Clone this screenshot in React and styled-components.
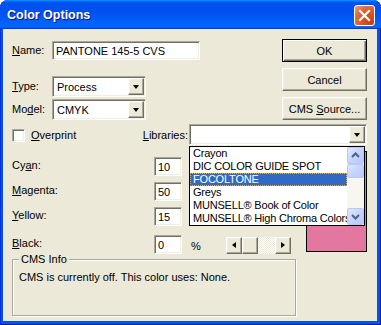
import React from "react";
import styled, { createGlobalStyle } from "styled-components";

const GlobalStyle = createGlobalStyle`
  html, body {
    margin: 0;
    padding: 0;
    background: #ffffff;
  }
  body {
    font-family: "Liberation Sans", Arial, sans-serif;
    font-size: 11px;
    color: #000;
  }
`;

const libraries = [
  "Crayon",
  "DIC COLOR GUIDE SPOT",
  "FOCOLTONE",
  "Greys",
  "MUNSELL® Book of Color",
  "MUNSELL® High Chroma Colors",
];

const values = [
  { label: "Cyan:", key: "a", pre: "Cy", post: "n:", value: "10", mt: 0 },
  { label: "Magenta:", key: "M", pre: "", post: "agenta:", value: "50", mt: 6 },
  { label: "Yellow:", key: "Y", pre: "", post: "ellow:", value: "15", mt: 6 },
];

const App = () => {
  return (
    <>
      <GlobalStyle />
      <Window>
        <TitleBar>
          <Title>Color Options</Title>
          <CloseButton>
            <svg width="21" height="21" viewBox="0 0 21 21">
              <path
                d="M6 6 L15 15 M15 6 L6 15"
                stroke="#fff"
                strokeWidth="2.2"
                strokeLinecap="square"
              />
            </svg>
          </CloseButton>
        </TitleBar>

        <Body>
          <TopSection>
            <FieldColumn>
              <FieldRow $h={19} $mt={2}>
                <Label>
                  <Key>N</Key>ame:
                </Label>
                <TextField $w={148}>PANTONE 145-5 CVS</TextField>
              </FieldRow>
              <FieldRow $h={21} $mt={16}>
                <Label>
                  <Key>T</Key>ype:
                </Label>
                <Combo $w={94}>
                  <ComboText>Process</ComboText>
                  <DropButton>
                    <TriDown />
                  </DropButton>
                </Combo>
              </FieldRow>
              <FieldRow $h={21} $mt={2}>
                <Label>
                  Mo<Key>d</Key>el:
                </Label>
                <Combo $w={94}>
                  <ComboText>CMYK</ComboText>
                  <DropButton>
                    <TriDown />
                  </DropButton>
                </Combo>
              </FieldRow>
            </FieldColumn>

            <ButtonColumn>
              <PushButton $default>OK</PushButton>
              <PushButton>Cancel</PushButton>
              <PushButton>
                <span>
                  CMS <Key>S</Key>ource...
                </span>
              </PushButton>
            </ButtonColumn>
          </TopSection>

          <LibRow>
            <CheckGroup>
              <CheckBox />
              <span>
                <Key>O</Key>verprint
              </span>
            </CheckGroup>
            <LibGroup>
              <span>
                <Key>L</Key>ibraries:
              </span>
              <ComboWrap>
                <Combo $w={178}>
                  <ComboText />
                  <DropButton>
                    <TriDown />
                  </DropButton>
                </Combo>
                <DropList>
                  <ListItems>
                    {libraries.map((name) => (
                      <ListItem key={name} $selected={name === "FOCOLTONE"}>
                        {name}
                      </ListItem>
                    ))}
                  </ListItems>
                  <VScroll>
                    <XpArrow>
                      <svg width="15" height="15" viewBox="0 0 15 15">
                        <polyline
                          points="4,9 7.5,5.5 11,9"
                          fill="none"
                          stroke="#4d6185"
                          strokeWidth="2"
                        />
                      </svg>
                    </XpArrow>
                    <XpThumb />
                    <VTrack />
                    <XpArrow>
                      <svg width="15" height="15" viewBox="0 0 15 15">
                        <polyline
                          points="4,6 7.5,9.5 11,6"
                          fill="none"
                          stroke="#4d6185"
                          strokeWidth="2"
                        />
                      </svg>
                    </XpArrow>
                  </VScroll>
                </DropList>
              </ComboWrap>
            </LibGroup>
          </LibRow>

          <ValuesSection>
            <ValueColumn>
              {values.map((v) => (
                <ValueRow key={v.label} $mt={v.mt}>
                  <ValueLabel>
                    {v.pre}
                    <Key>{v.key}</Key>
                    {v.post}
                  </ValueLabel>
                  <TextField $w={28}>{v.value}</TextField>
                </ValueRow>
              ))}
              <ValueRow $mt={9}>
                <ValueLabel>
                  <Key>B</Key>lack:
                </ValueLabel>
                <TextField $w={28}>0</TextField>
                <Percent>%</Percent>
                <HScroll>
                  <ClassicArrow>
                    <TriLeft />
                  </ClassicArrow>
                  <ClassicThumb />
                  <HTrack />
                  <ClassicArrow>
                    <TriRight />
                  </ClassicArrow>
                </HScroll>
              </ValueRow>
            </ValueColumn>
            <Swatch />
          </ValuesSection>

          <GroupBox>
            <GroupLegend>CMS Info</GroupLegend>
            <GroupText>CMS is currently off. This color uses: None.</GroupText>
          </GroupBox>
        </Body>
      </Window>
    </>
  );
};

export default App;

const sunken = `
  border: 1px solid;
  border-color: #aca899 #ffffff #ffffff #aca899;
  box-shadow: inset 1px 1px 0 #716f64, inset -1px -1px 0 #f1efe2;
`;

const raised = `
  border: 1px solid;
  border-color: #ffffff #716f64 #716f64 #ffffff;
  box-shadow: inset -1px -1px 0 #aca899, inset 1px 1px 0 #f1efe2;
  background: #ece9d8;
`;

const Window = styled.div`
  width: 381px;
  height: 325px;
  box-sizing: border-box;
  display: flex;
  flex-direction: column;
  background: #0054e3;
  border-radius: 8px 8px 0 0;
  overflow: hidden;
  box-shadow: inset 1px 0 0 #0831d9, inset -1px 0 0 #001ea0,
    inset 0 -1px 0 #001ea0;
`;

const TitleBar = styled.div`
  height: 29px;
  flex: none;
  display: flex;
  align-items: center;
  justify-content: space-between;
  padding: 1px 6px 0 7px;
  box-sizing: border-box;
  background: linear-gradient(
    180deg,
    #0997ff,
    #0053ee 8%,
    #0050ee 40%,
    #0066ff 88%,
    #0066ff 93%,
    #005bff 95%,
    #003dd7 96%,
    #003dd7
  );
`;

const Title = styled.div`
  color: #fff;
  font-weight: bold;
  font-size: 12.5px;
  text-shadow: 1px 1px 0 #0f1089;
`;

const CloseButton = styled.div`
  width: 21px;
  height: 21px;
  box-sizing: border-box;
  border: 1px solid #fff;
  border-radius: 3px;
  display: flex;
  align-items: center;
  justify-content: center;
  background: radial-gradient(
    circle at 85% 85%,
    #c8400e 0%,
    #dc5a2c 50%,
    #e2724c 75%,
    #f0a88c 100%
  );
  svg {
    margin: -1px;
  }
`;

const Body = styled.div`
  flex: 1;
  margin: 0 4px 4px 3px;
  background: #ece9d8;
  padding: 10px 10px 5px 9px;
  display: flex;
  flex-direction: column;
  min-height: 0;
`;

const TopSection = styled.div`
  display: flex;
  justify-content: space-between;
  align-items: flex-start;
`;

const FieldColumn = styled.div`
  display: flex;
  flex-direction: column;
`;

const FieldRow = styled.div`
  display: flex;
  align-items: center;
  height: ${({ $h }) => $h}px;
  margin-top: ${({ $mt }) => $mt}px;
`;

const Label = styled.span`
  width: 40px;
  flex: none;
  margin-top: -2px;
`;

const Key = styled.span`
  text-decoration: underline;
  text-underline-offset: 1px;
`;

const TextField = styled.div`
  ${sunken}
  width: ${({ $w }) => $w}px;
  height: 100%;
  box-sizing: border-box;
  background: #fff;
  padding: 0 3px;
  display: flex;
  align-items: center;
  white-space: nowrap;
  overflow: hidden;
`;

const Combo = styled.div`
  ${sunken}
  width: ${({ $w }) => $w}px;
  height: 21px;
  box-sizing: border-box;
  background: #fff;
  display: flex;
  align-items: stretch;
  padding: 1px;
`;

const ComboText = styled.div`
  flex: 1;
  display: flex;
  align-items: center;
  padding-left: 3px;
`;

const DropButton = styled.div`
  ${raised}
  width: 16px;
  box-sizing: border-box;
  display: flex;
  align-items: center;
  justify-content: center;
`;

const TriDown = styled.span`
  width: 0;
  height: 0;
  border-left: 3.5px solid transparent;
  border-right: 3.5px solid transparent;
  border-top: 4px solid #000;
  margin-top: 1px;
`;

const TriLeft = styled.span`
  width: 0;
  height: 0;
  border-top: 3.5px solid transparent;
  border-bottom: 3.5px solid transparent;
  border-right: 4px solid #000;
`;

const TriRight = styled.span`
  width: 0;
  height: 0;
  border-top: 3.5px solid transparent;
  border-bottom: 3.5px solid transparent;
  border-left: 4px solid #000;
`;

const ButtonColumn = styled.div`
  display: flex;
  flex-direction: column;
  gap: 6px;
`;

const PushButton = styled.div`
  width: 85px;
  height: 23px;
  box-sizing: border-box;
  display: flex;
  align-items: center;
  justify-content: center;
  white-space: pre;
  ${({ $default }) =>
    $default
      ? `
    border: 1px solid #000;
    background: #ece9d8;
    box-shadow: inset 1px 1px 0 #fff, inset -1px -1px 0 #716f64,
      inset -2px -2px 0 #aca899;
  `
      : raised}
`;

const LibRow = styled.div`
  display: flex;
  align-items: center;
  justify-content: space-between;
  height: 21px;
  margin-top: 4px;
  position: relative;
  z-index: 2;
`;

const CheckGroup = styled.div`
  display: flex;
  align-items: center;
  gap: 6px;
  margin-top: 1px;
`;

const CheckBox = styled.div`
  ${sunken}
  width: 13px;
  height: 13px;
  box-sizing: border-box;
  background: #fff;
`;

const LibGroup = styled.div`
  display: flex;
  align-items: center;
  gap: 1px;
`;

const ComboWrap = styled.div`
  position: relative;
`;

const DropList = styled.div`
  position: absolute;
  top: 22px;
  left: 0;
  width: 176px;
  height: 80px;
  box-sizing: border-box;
  border: 1px solid #000;
  background: #fff;
  display: flex;
`;

const ListItems = styled.div`
  flex: 1;
  min-width: 0;
  overflow: hidden;
`;

const ListItem = styled.div`
  height: 13px;
  line-height: 13px;
  padding-left: 3px;
  white-space: nowrap;
  overflow: hidden;
  letter-spacing: -0.2px;
  background: ${({ $selected }) => ($selected ? "#316ac5" : "transparent")};
  color: ${({ $selected }) => ($selected ? "#fff" : "#000")};
  outline: ${({ $selected }) => ($selected ? "1px dotted #e8b050" : "none")};
  outline-offset: -1px;
`;

const VScroll = styled.div`
  width: 17px;
  flex: none;
  display: flex;
  flex-direction: column;
  background: #f7f6f1;
`;

const xpPart = `
  box-sizing: border-box;
  border: 1px solid #b6c9f7;
  border-radius: 2px;
  background: linear-gradient(135deg, #e0e9fe 0%, #c6d6fc 45%, #b7cbf8 100%);
`;

const XpArrow = styled.div`
  ${xpPart}
  height: 17px;
  display: flex;
  align-items: center;
  justify-content: center;
`;

const XpThumb = styled.div`
  ${xpPart}
  height: 14px;
`;

const VTrack = styled.div`
  flex: 1;
`;

const ValuesSection = styled.div`
  display: flex;
  justify-content: space-between;
  align-items: flex-start;
  padding-top: 6px;
`;

const ValueColumn = styled.div`
  display: flex;
  flex-direction: column;
  padding-top: 6px;
`;

const ValueRow = styled.div`
  display: flex;
  align-items: center;
  height: 19px;
  margin-top: ${({ $mt }) => $mt}px;
`;

const ValueLabel = styled.span`
  width: 142px;
  flex: none;
  margin-top: -3px;
`;

const Percent = styled.span`
  width: 9px;
  margin-left: 9px;
  margin-top: 2px;
`;

const HScroll = styled.div`
  display: flex;
  height: 17px;
  width: 65px;
  margin-left: 26px;
  margin-top: 1px;
`;

const ClassicArrow = styled.div`
  ${raised}
  width: 16px;
  box-sizing: border-box;
  display: flex;
  align-items: center;
  justify-content: center;
`;

const ClassicThumb = styled.div`
  ${raised}
  width: 16px;
  box-sizing: border-box;
`;

const HTrack = styled.div`
  flex: 1;
  background: repeating-conic-gradient(#ece9d8 0 25%, #ffffff 0 50%) 0 0 / 2px
    2px;
`;

const Swatch = styled.div`
  width: 61px;
  height: 101px;
  box-sizing: border-box;
  border: 1px solid #000;
  background: #e3779f;
`;

const GroupBox = styled.fieldset`
  margin: -1px 0 0 0;
  padding: 0 6px;
  width: 284px;
  box-sizing: border-box;
  flex: 1;
  min-width: 0;
  border: 1px solid #aca899;
  box-shadow: inset 1px 1px 0 #fff, 1px 1px 0 #fff;
`;

const GroupLegend = styled.legend`
  padding: 0 2px;
  margin-left: 0;
  line-height: 12px;
  background: #ece9d8;
`;

const GroupText = styled.div`
  margin-top: 6px;
  line-height: 13px;
`;
